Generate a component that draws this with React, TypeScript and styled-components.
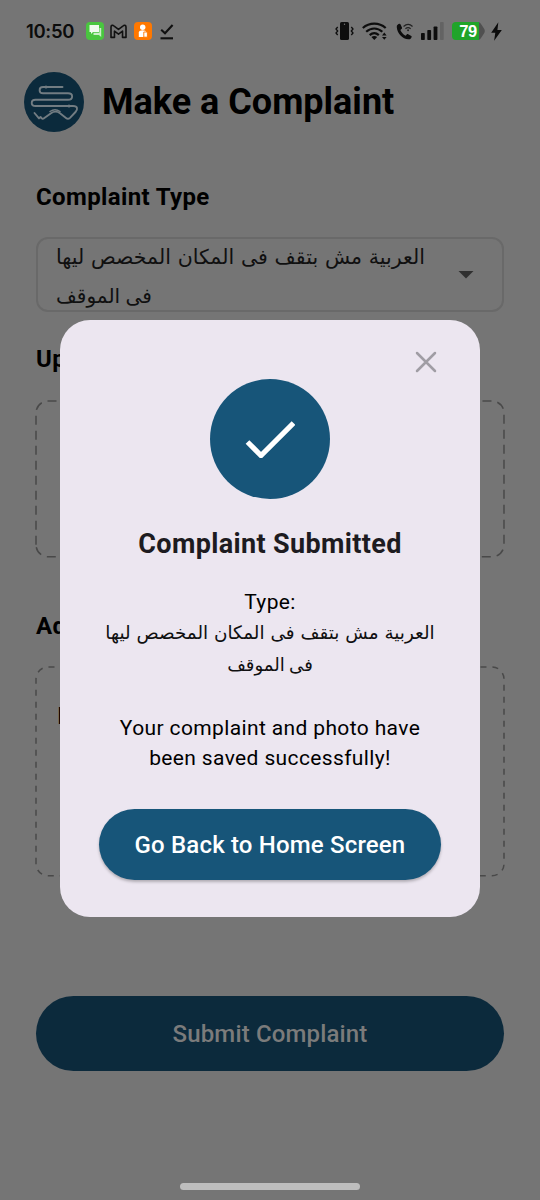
import React from 'react';
import styled, { createGlobalStyle } from 'styled-components';

const Global = createGlobalStyle`
  * { box-sizing: border-box; }
  html, body { margin: 0; padding: 0; background: #757575; }
  body { font-family: Roboto, "DejaVu Sans", sans-serif; color: #000; }
`;

const Screen = styled.div`
  position: relative;
  width: 540px;
  height: 1200px;
  overflow: hidden;
  background: #757575;
  display: flex;
  flex-direction: column;
`;

const StatusBar = styled.div`
  height: 62px;
  padding: 0 38px 0 26px;
  display: flex;
  align-items: center;
  justify-content: space-between;
`;

const StatusGroup = styled.div<{ $gap: number; $lastShift: number }>`
  display: flex;
  align-items: center;
  gap: ${(p) => p.$gap}px;
  svg { display: block; flex: none; }
  svg:last-child { margin-left: ${(p) => p.$lastShift}px; }
`;

const Clock = styled.span`
  width: 53.5px;
  font: 600 18.5px/22px Inter, sans-serif;
  letter-spacing: -0.35px;
  color: #0c0c0c;
  white-space: nowrap;
`;

const Header = styled.header`
  height: 80px;
  padding-left: 24px;
  display: flex;
  align-items: center;
  gap: 18px;
`;

const Title = styled.h1`
  margin: 0;
  font-size: 36px;
  line-height: 44px;
  font-weight: 700;
  white-space: nowrap;
`;

const Form = styled.main`
  padding: 0 36px;
  display: flex;
  flex-direction: column;
`;

const Label = styled.h2<{ $top: number; $bottom: number }>`
  margin: ${(p) => p.$top}px 0 ${(p) => p.$bottom}px;
  font-size: 24px;
  line-height: 28px;
  font-weight: 700;
  letter-spacing: 0.37px;
  white-space: nowrap;
`;

const Select = styled.div`
  height: 75px;
  border: 2px solid #696969;
  border-radius: 12px;
  padding: 0 28px 0 18px;
  display: flex;
  align-items: center;
  justify-content: space-between;
`;

const Lines = styled.div<{ $align: string; $pitch: number; $top?: number }>`
  display: flex;
  flex-direction: column;
  align-items: ${(p) => p.$align};
  padding-top: ${(p) => p.$top ?? 0}px;
  font-family: "DejaVu Sans", sans-serif;
  line-height: ${(p) => p.$pitch}px;
`;

const ArabicLine = styled.span<{ $size: number; $word: number }>`
  font-size: ${(p) => p.$size}px;
  word-spacing: ${(p) => p.$word}px;
  color: #101010;
  white-space: nowrap;
`;

const Dashed = styled.div<{ $h: number }>`
  height: ${(p) => p.$h}px;
  svg { display: block; overflow: visible; }
`;

const NoteArea = styled.div`
  position: relative;
`;

const NoteText = styled.span`
  position: absolute;
  left: 21px;
  top: 35px;
  font-size: 24px;
  line-height: 28px;
`;

const SubmitButton = styled.button`
  margin: 120px 0 0;
  height: 75px;
  padding: 2px 0 0;
  border: 0;
  border-radius: 38px;
  background: #0c2a3c;
  color: #7b7b7b;
  font: 500 24px/28px Roboto, sans-serif;
  letter-spacing: 0.15px;
`;

const HomeBar = styled.div`
  position: absolute;
  left: 180px;
  bottom: 10px;
  width: 180px;
  height: 7px;
  border-radius: 3.5px;
  background: #bebebe;
`;

const Dialog = styled.section`
  position: absolute;
  left: 60px;
  top: 319.6px;
  width: 420px;
  height: 597px;
  border-radius: 30px;
  background: #ece6f0;
  display: flex;
  flex-direction: column;
  align-items: center;
`;

const CloseRow = styled.div`
  align-self: stretch;
  height: 59.8px;
  padding: 31px 43px 0 0;
  display: flex;
  justify-content: flex-end;
  svg { display: block; }
`;

const CheckCircle = styled.div`
  width: 120px;
  height: 120px;
  border-radius: 50%;
  background: #175579;
  display: flex;
  flex: none;
  svg { margin: auto; display: block; }
`;

const DialogTitle = styled.h3`
  margin: 27.3px 0 0;
  font-size: 27px;
  line-height: 34px;
  font-weight: 700;
  letter-spacing: 0.35px;
  color: #1d1b20;
  white-space: nowrap;
`;

const Body = styled.p<{ $top: number }>`
  margin: ${(p) => p.$top}px 0 0;
  font-size: 21px;
  line-height: 30px;
  letter-spacing: 0.37px;
  text-align: center;
  white-space: nowrap;
`;

const HomeButton = styled.button`
  margin: 36px 0 0;
  width: 342px;
  height: 71px;
  padding: 1px 0 0;
  flex: none;
  border: 0;
  border-radius: 36px;
  background: #175579;
  color: #fff;
  font: 500 24px/28px Roboto, sans-serif;
  letter-spacing: 0.17px;
  box-shadow: 0 2px 3px rgba(0, 0, 0, 0.25);
`;

const FIRST = 'العربية مش بتقف فى المكان المخصص ليها';
const SECOND = 'فى الموقف';

function DashFrame({ h, dash, gap }: { h: number; dash: number; gap: number }) {
  const w = 468;
  const r = 12;
  return (
    <svg width={w} height={h} viewBox={`0 0 ${w} ${h}`}>
      <path
        d={`M0 ${h - r}V${r}A${r} ${r} 0 0 1 ${r} 0H${w - r}A${r} ${r} 0 0 1 ${w} ${r}V${h - r}A${r} ${r} 0 0 1 ${w - r} ${h}H${r}A${r} ${r} 0 0 1 0 ${h - r}`}
        fill="none"
        stroke="#494949"
        strokeWidth="1.5"
        strokeDasharray={`${dash} ${gap}`}
      />
    </svg>
  );
}

const ChatIcon = () => (
  <svg width="18" height="18" viewBox="0 0 18 18">
    <rect width="18" height="18" rx="4" fill="#49c63f" />
    <path d="M3.5 3h9.500v7H7L5 12V10H3.500z" fill="#f0fbef" />
    <path d="M13.500 6h1.700v9l-2.300-2H7.500v-2.300h6z" fill="#c9efc5" />
  </svg>
);

const MailIcon = () => (
  <svg width="17" height="15" viewBox="0 0 18 16">
    <path d="M1 14.300V3.200C1 1.200 3 1 4 1.900L9 5.800l5-3.900c1-.9 3-.7 3 1.300v11.100h-3.700V7.600L9 10.800 4.700 7.600v6.700z" fill="none" stroke="#111" strokeWidth="1.700" strokeLinejoin="round" />
  </svg>
);

const PersonIcon = () => (
  <svg width="18" height="18" viewBox="0 0 18 18">
    <rect width="18" height="18" rx="4" fill="#ff7800" />
    <circle cx="8.7" cy="5.2" r="2.7" fill="#fff" />
    <path d="M4.8 15V10.5c0-3 7.6-3 7.6 0V15z" fill="#fff" />
    <path d="M9.8 10h3.6v5.2H9.8z" fill="#fff" stroke="#ff7800" strokeWidth=".9" />
  </svg>
);

const DoneIcon = () => (
  <svg width="14" height="17" viewBox="0 0 14 17" fill="none" stroke="#101010" strokeWidth="2.100">
    <path d="M1.200 6.800 5 10.300 12.600 2" />
    <path d="M.5 15.300h12.500" />
  </svg>
);

const VibrateIcon = () => (
  <svg width="19" height="18" viewBox="0 0 19 18">
    <rect x="5" y="0" width="9" height="18" rx="1.6" fill="#0d0d0d" />
    <circle cx="9.5" cy="2.2" r=".7" fill="#757575" />
    <path d="M2.7 5 1 7l1.700 2L1 11l1.700 2M16.300 5 18 7l-1.700 2L18 11l-1.700 2" fill="none" stroke="#0d0d0d" strokeWidth="1.300" />
  </svg>
);

const WifiIcon = () => (
  <svg width="25" height="18" viewBox="0 0 25 18" fill="none" stroke="#0d0d0d" strokeWidth="2.200">
    <path d="M.8 6C7.500 .2 17 .2 23.700 6" />
    <path d="M4.200 9.700C9 5.400 15.500 5.400 20.300 9.700" />
    <path d="M7.700 13.100c2.800-2.500 6.300-2.500 9.100 0" />
    <path d="m9.400 15 2.900 2.900 2.900-2.900c-1.700-1.300-4.100-1.300-5.800 0z" fill="#0d0d0d" stroke="none" />
    <path d="m20 13.400 2.300-2.800 2.300 2.800zM20 14.900h4.600l-2.300 2.800z" fill="#0d0d0d" stroke="none" />
  </svg>
);

const CallIcon = () => (
  <svg width="17" height="17" viewBox="0 0 18 18">
    <path d="M3.600.8C2.500 1 .7 2 .8 4.200 1.300 11.500 7 16.600 13 17.300c2 .1 3.200-1.200 3.600-2.500.1-.5 0-.9-.4-1.100l-3.300-1.900c-.5-.3-.9-.2-1.300.2l-1.400 1.500C7.700 12.300 5.700 10.100 4.600 7.500l1.500-1.400c.4-.4.4-.8.2-1.300L4.700 1.400C4.500.900 4.100.7 3.600.8z" fill="#0d0d0d" />
    <path d="M8 3.700c3-2.700 6.700-2.700 9.500 0M10 6c1.700-1.500 3.800-1.500 5.500 0" fill="none" stroke="#222" strokeWidth="1.300" />
    <circle cx="12.800" cy="7.700" r="1" fill="#222" />
  </svg>
);

const SignalIcon = () => (
  <svg width="23" height="18" viewBox="0 0 23 18" fill="#0d0d0d">
    <rect x="0" y="11" width="3.800" height="7" rx=".8" />
    <rect x="6.300" y="8" width="3.800" height="10" rx=".8" />
    <rect x="12.600" y="4.500" width="3.800" height="13.500" rx=".8" />
    <rect x="19" y="0" width="3.700" height="18" rx=".8" fill="#636363" />
  </svg>
);

const BatteryIcon = () => (
  <svg width="33" height="18" viewBox="0 0 33 18">
    <path d="M5 0h21q2 0 3 2l3.300 5q1 2 0 4L29 16q-1 2-3 2H5z" fill="#505050" />
    <path d="M4 0h23v18H4q-4 0-4-4V4q0-4 4-4z" fill="#20a42a" />
    <text x="16" y="14.800" textAnchor="middle" fill="#fff" fontFamily="Liberation Sans, sans-serif" fontWeight="700" fontSize="16.500" letterSpacing="-.5">79</text>
  </svg>
);

const BoltIcon = () => (
  <svg width="11" height="19" viewBox="0 0 12 20">
    <path d="M8 0 .2 11.300h4.500L3.400 20 11.800 8.300H7z" fill="#0b0b0b" />
  </svg>
);

const Logo = () => (
  <svg width="60" height="60" viewBox="0 0 60 60" fill="none" strokeLinecap="round" strokeLinejoin="round">
    <circle cx="30" cy="30" r="30" fill="#0b2a3c" />
    <g stroke="#727c82" strokeWidth="1.900">
      <path d="M38.500 15H19c-4.500 0-4.500 6.300 0 6.300h25c5.500 0 5.500 6.500 0 6.500H11.500c-5 0-5 6.200 0 6.200H49c5 0 4.800 3.500 2.500 6L46 45.800q-2 2-4 .2l-6-4.700q-4.500-3.300-9 0l-7 5q-1.500 1.200-2.700-.4l-.8-1-1.500 1.500-4.500-5.400" />
      <path d="M26 39.500q5-3.500 10 0" strokeWidth="1.500" />
    </g>
    <circle cx="22" cy="15" r="1.500" fill="#727c82" />
    <circle cx="45" cy="34" r="1.500" fill="#727c82" />
  </svg>
);

export default function App() {
  return (
    <Screen>
      <Global />
      <StatusBar>
        <StatusGroup $gap={6.4} $lastShift={2}>
          <Clock>10:50</Clock>
          <ChatIcon />
          <MailIcon />
          <PersonIcon />
          <DoneIcon />
        </StatusGroup>
        <StatusGroup $gap={8.2} $lastShift={-2.2}>
          <VibrateIcon />
          <WifiIcon />
          <CallIcon />
          <SignalIcon />
          <BatteryIcon />
          <BoltIcon />
        </StatusGroup>
      </StatusBar>
      <Header>
        <Logo />
        <Title>Make a Complaint</Title>
      </Header>
      <Form>
        <Label $top={41} $bottom={26}>Complaint Type</Label>
        <Select>
          <Lines $align="flex-start" $pitch={39} $top={4}>
            <ArabicLine dir="rtl" $size={20.5} $word={0.3}>{FIRST}</ArabicLine>
            <ArabicLine dir="rtl" $size={20.1} $word={-1}>{SECOND}</ArabicLine>
          </Lines>
          <svg width="16" height="8" viewBox="0 0 16 8"><path d="M.5 0h15L8 7.500z" fill="#303030" /></svg>
        </Select>
        <Label $top={33} $bottom={27.5}>Upload</Label>
        <Dashed $h={155.8}><DashFrame h={155.8} dash={9} gap={6} /></Dashed>
        <Label $top={55.7} $bottom={27.2}>Add</Label>
        <NoteArea>
          <Dashed $h={208.8}><DashFrame h={208.8} dash={6} gap={6} /></Dashed>
          <NoteText>E</NoteText>
        </NoteArea>
        <SubmitButton>Submit Complaint</SubmitButton>
      </Form>
      <HomeBar />
      <Dialog role="dialog">
        <CloseRow>
          <svg width="22" height="22" viewBox="0 0 22 22"><path d="m2 2 18 18M20 2 2 20" stroke="#a09da4" strokeWidth="2.500" strokeLinecap="round" /></svg>
        </CloseRow>
        <CheckCircle>
          <svg width="50" height="38" viewBox="0 0 50 38"><path d="M2.500 22 16 35.500 48.500 3" fill="none" stroke="#fff" strokeWidth="5.200" /></svg>
        </CheckCircle>
        <DialogTitle>Complaint Submitted</DialogTitle>
        <Body $top={26}>Type:</Body>
        <Lines $align="center" $pitch={32} $top={0.3}>
          <ArabicLine dir="rtl" $size={18.4} $word={0}>{FIRST}</ArabicLine>
          <ArabicLine dir="rtl" $size={18.1} $word={-1.5}>{SECOND}</ArabicLine>
        </Lines>
        <Body $top={32.3}>Your complaint and photo have<br />been saved successfully!</Body>
        <HomeButton>Go Back to Home Screen</HomeButton>
      </Dialog>
    </Screen>
  );
}
